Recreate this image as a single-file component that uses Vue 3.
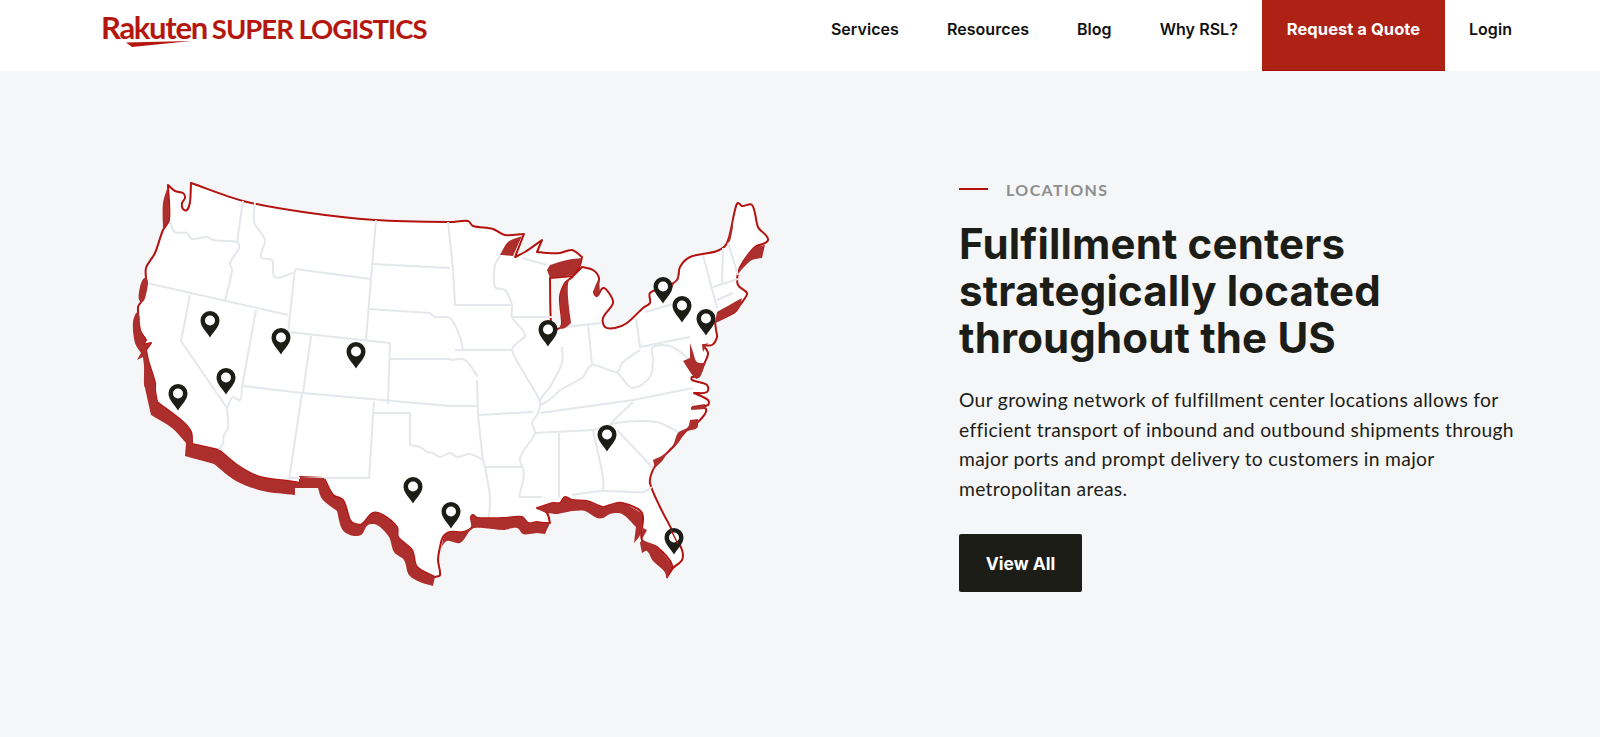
<script setup>
const nav = ['Services', 'Resources', 'Blog', 'Why RSL?']

function curve(str, closed) {
  const p = str.trim().split(/\s+/).map((s) => {
    const sharp = s.endsWith('!')
    const [x, y] = s.replace('!', '').split(',').map(Number)
    return { x, y, sharp }
  })
  const n = p.length
  const at = (i) => (closed ? p[(i + n) % n] : p[Math.max(0, Math.min(n - 1, i))])
  const dir = (a, b) => {
    const dx = b.x - a.x
    const dy = b.y - a.y
    const l = Math.hypot(dx, dy) || 1
    return [dx / l, dy / l]
  }
  const f = (v) => v.toFixed(1)
  let d = `M${p[0].x},${p[0].y}`
  const segs = closed ? n : n - 1
  for (let i = 0; i < segs; i++) {
    const a = at(i)
    const b = at(i + 1)
    const len = Math.hypot(b.x - a.x, b.y - a.y) * 0.3
    const t1 = a.sharp ? dir(a, b) : dir(at(i - 1), b)
    const t2 = b.sharp ? dir(a, b) : dir(a, at(i + 2))
    d += `C${f(a.x + t1[0] * len)},${f(a.y + t1[1] * len)} ${f(b.x - t2[0] * len)},${f(b.y - t2[1] * len)} ${b.x},${b.y}`
  }
  return closed ? d + 'Z' : d
}

const land = curve(`168,185! 175,191 183,193 185,198 182,203 183,209 187,210 190,202 191,183!
 243,201 303,212 375,220 450,222 468,221 473,226 493,229 505,235 524,234! 515,257! 525,252 542,240! 537,252! 547,253 560,253 572,250 582,257!
 580,265 573,276! 550,278! 551,323 554,328 560,328 562,323 560,297 565,283 571,278! 582,267!
 593,270 599,278 597,287 594,292 597,296 603,288 609,293 613,303 603,318 605,327 615,328 627,323 643,308 650,303 650,293 663,288 677,280 680,267 690,257 717,251 727,243 735,210 738,203 742,206 752,205 758,227 768,240 755,247 743,262 738,273 738,285 747,293 745,298 740,305 735,312 715,322! 716,330 717,337 712,345 703,345! 708,353 705,362 698,377 692,377 692,380
 707,385 707,392 694,393! 708,400 708,405 692,408! 706,409 698,422 685,432 675,445 658,462 652,472 650,483 660,507 672,530 682,550 682,560 673,568 667,577!
 672,565 657,547 642,540 642,513 622,503 610,505 603,507 587,501 572,500 565,497 560,503 553,503 537,508! 547,513 550,523! 543,523 537,522 528,523 522,517 503,518 477,518 473,515 471,518 472,527 463,532 450,532 443,537 440,547 438,560 440,575 435,577!
 417,567 412,550 398,537 397,527 383,515 373,513 362,524 355,524 350,520 343,500 333,495 324,478! 300,477! 300,483! 288,481 260,477 237,465 219,450! 192,444! 191,432 183,422 157,402! 155,390 155,383 148,360 146,350! 151,343! 143,345! 146,340! 140,330 138,307 141,302 146,283 146,268 155,253 163,230 169,220`, true)

const shadows = [
  '168,186! 169,220! 163,230! 163,203',
  '146,278 140,287 141,302 147,290',
  `138,313 133,322 135,343 141,353! 137,360! 143,357! 144,367 144,385 145,388! 151,415! 172,428 186,443! 185,456! 214,464! 236,481 263,491 295,495! 295,488! 318,488! 322,499 337,511! 342,529 350,535 361,535 368,525 377,525 389,537 394,552 404,560 409,575 420,582 433,586! 435,577! 417,567 412,550 398,537 397,527 383,515 373,513 362,524 355,524 350,520 343,500! 333,495 324,478! 300,477! 300,483! 288,481 260,477 237,465 219,450! 192,444! 191,432 183,422 157,402! 155,390 155,383 148,360 146,350! 151,343! 143,345! 146,340! 140,330`,
  `667,579! 664,571 653,561 647,551 642,553! 640,543! 647,530! 643,528! 639,537 634,543! 636,527! 622,514 610,514 603,518 597,518 585,511 573,511 562,513 557,514 547,513! 550,523! 545,534! 537,533! 530,534! 523,534 517,528 503,530 483,528 472,529 460,543 447,541 441,548! 442,545 444,537 450,532 463,532 472,527! 471,518 473,515 477,518 503,518 522,517 528,523 537,522 543,523 550,523! 547,513! 537,508! 553,503 560,503 565,497 572,500 587,501 603,507 610,505 622,503 642,513! 642,540! 657,547 672,565!`,
  '582,258! 567,260 550,265! 547,270! 550,278! 573,275! 580,265!',
  '522,236! 508,242 500,255! 513,256!',
  '567,281! 565,283 560,297 562,323! 560,328 565,328 571,323! 568,297 569,280 575,277!',
  '599,278! 594,290 596,296 600,293!',
  '733,220! 728,240 727,243! 730,241 733,227!',
  '765,245! 755,247 743,262 739,273! 743,268 752,260 762,258!',
  '678,280! 680,272! 672,288! 668,288!',
  '742,298! 733,303 717,312! 715,323! 733,313 740,307!',
  '702,345! 708,343! 703,352!',
  '690,343! 693,352 697,362 705,363! 700,377 695,378 683,361! 690,358!',
  '690,420! 698,419! 697,428 685,432 678,443 670,448 663,460 655,468! 653,460! 663,455 673,445 678,433 688,427',
  '692,406! 705,404! 705,409! 691,410!'
].map((s) => curve(s, true))

const rivers = [
  '170,222 175,232 187,233 192,239 207,237 213,240 237,242 239,248 230,263 232,270 225,301',
  '255,202 254,222 265,240 261,257 272,260 275,277 293,273',
  '430,313 435,317 450,318 460,337 463,350',
  '227,408 228,428 224,435 223,443 219,450',
  '242,386 240,400 233,397 227,408',
  '410,445 420,447 427,452 433,453 440,457 450,453 457,457 470,454 483,460',
  '448,222 450,240 453,270 455,305',
  '500,256 495,265 495,287 505,290 512,305 512,317 525,335 517,343 512,350 528,380 540,402 538,413 532,423 535,433 520,458 524,473 519,497',
  '450,360 465,360 478,377',
  '562,347 562,363 550,387 540,403 553,397 560,390 573,383 583,377 592,365 617,372 622,363 640,350',
  '617,372 622,378 633,388 650,377 653,360 653,347 672,347 690,360',
  '633,402 617,417 610,425',
  '593,430 617,423 643,421 660,423 680,433',
  '572,495 603,491 643,492 652,487',
  '593,430 603,477 603,492',
  '478,415 483,460 485,467 490,497 489,517'
].map((s) => curve(s, false))

const lines = [
  '243,201 237,242',
  '147,283 288,315',
  '190,295 181,341 227,408',
  '295,269 371,279',
  '295,269 288,333',
  '371,279 366,340',
  '288,332 390,343',
  '376,220 371,279',
  '373,264 450,268',
  '369,309 430,313',
  '256,310 242,387',
  '311,336 303,393',
  '390,343 388,404',
  '390,359 450,359',
  '242,386 303,393 450,406 477,406',
  '302,393 289,480',
  '374,402 369,478 290,478',
  '374,413 410,413 410,445',
  '454,305 512,305',
  '455,350 512,350',
  '477,380 478,415',
  '478,415 533,412',
  '485,467 522,467',
  '535,433 593,430',
  '559,433 559,497',
  '519,497 542,497',
  '512,317 552,317',
  '565,327 602,323',
  '588,323 592,365',
  '636,318 640,347 690,337',
  '645,312 677,303',
  '540,413 633,400 693,388',
  '617,430 653,468',
  '703,255 717,308',
  '723,248 722,283',
  '728,243 738,275',
  '713,287 738,279',
  '717,300 733,293',
  '522,258 547,265'
].map((s) => 'M' + s.trim().split(/\s+/).join('L'))

const pins = [
  [210, 321], [281, 338], [356, 352], [226, 378], [178, 394], [413, 487], [451, 512],
  [607, 435], [674, 538], [548, 330], [663, 287], [682, 306], [706, 319]
]
</script>

<template>
  <div class="page">
    <header class="header">
      <a class="logo">
        <span class="logo-r">Rakuten</span>
        <span class="logo-s">SUPER LOGISTICS</span>
        <svg class="swoosh" width="66" height="7" viewBox="0 0 66 7"><polygon points="0,1.5 65,0 6,6" fill="#b5170f" /></svg>
      </a>
      <nav class="nav">
        <a v-for="n in nav" :key="n" class="nav-item">{{ n }}</a>
        <a class="nav-cta">Request a Quote</a>
        <a class="nav-item">Login</a>
      </nav>
    </header>

    <main class="main">
      <svg class="map" width="660" height="440" viewBox="120 170 660 440">
        <path :d="land" class="land" />
        <path v-for="(d, i) in lines" :key="'l' + i" :d="d" class="state" />
        <path v-for="(d, i) in rivers" :key="'r' + i" :d="d" class="state" />
        <path v-for="(d, i) in shadows" :key="'s' + i" :d="d" class="shadow" />
        <g v-for="(p, i) in pins" :key="'p' + i" :transform="`translate(${p[0]} ${p[1]})`">
          <path d="M0,16.5C-3,11 -9.5,6 -9.5,-0.5A9.5,9.5 0 1 1 9.5,-0.5C9.5,6 3,11 0,16.5Z" fill="#1d1d17" />
          <circle cx="0" cy="-0.5" r="5" fill="#fff" />
        </g>
        <path d="M671,530L678,544" class="over" />
      </svg>

      <section class="copy">
        <div class="eyebrow"><span class="rule"></span><span>LOCATIONS</span></div>
        <h1>Fulfillment centers strategically located throughout the US</h1>
        <p>Our growing network of fulfillment center locations allows for efficient transport of inbound and outbound shipments through major ports and prompt delivery to customers in major metropolitan areas.</p>
        <a class="btn">View All</a>
      </section>
    </main>
  </div>
</template>

<style>
html, body { margin: 0; background: #f5f6f8; }
</style>

<style scoped>
.page {
  height: 737px;
  overflow: hidden;
  background: #f5f6f8;
  font-family: "Lato", "Liberation Sans", sans-serif;
  color: #1d1d17;
}
.header {
  height: 71px;
  background: #fff;
  display: flex;
  justify-content: space-between;
  padding: 0 64px 0 101px;
}
.logo {
  position: relative;
  display: flex;
  align-items: baseline;
  gap: 5px;
  padding-top: 10px;
  height: 40px;
  color: #b5170f;
  white-space: nowrap;
}
.logo-r { font-size: 31px; line-height: 34px; font-weight: 700; letter-spacing: -1.3px; }
.logo-s { font-size: 27.5px; line-height: 34px; font-weight: 700; letter-spacing: -1px; }
.swoosh { position: absolute; left: 25px; top: 41px; }
.nav { display: flex; align-items: stretch; }
.nav-item, .nav-cta {
  display: flex;
  align-items: center;
  padding: 0 24px 13px;
  font-family: "Inter", "Liberation Sans", sans-serif;
  font-size: 16px;
  font-weight: 600;
  letter-spacing: 0.05px;
  color: #111;
}
.nav-cta {
  width: 183px;
  box-sizing: border-box;
  justify-content: center;
  padding: 0 0 13px;
  background: #ae2216;
  border-bottom: 1px solid #a30f08;
  color: #fff;
  font-size: 16.5px;
  font-weight: 700;
}
.main { display: flex; gap: 179px; padding: 99px 0 0 120px; }
.map { flex: none; display: block; }
.land { fill: #fff; stroke: #b3120e; stroke-width: 2; stroke-linejoin: round; }
.state { fill: none; stroke: #e4e7ec; stroke-width: 2; }
.shadow { fill: #ad2f2d; }
.over { stroke: #b3120e; stroke-width: 1.4; fill: none; }
.copy { width: 570px; padding-top: 8px; }
.eyebrow {
  display: flex;
  align-items: center;
  gap: 18px;
  height: 22px;
  font-size: 16px;
  font-weight: 700;
  letter-spacing: 1.4px;
  color: #8d8e8f;
}
.rule { width: 29px; height: 2px; background: #b5120c; }
h1 {
  margin: 20px 0 0;
  font-family: "Inter", "Liberation Sans", sans-serif;
  font-size: 42px;
  line-height: 47px;
  font-weight: 700;
  letter-spacing: 0.15px;
  width: 480px;
}
p {
  margin: 24px 0 0;
  font-size: 19.3px;
  line-height: 29.6px;
  font-weight: 400;
  letter-spacing: 0.31px;
  width: 570px;
}
.btn {
  margin-top: 31px;
  width: 123px;
  height: 58px;
  border-radius: 2px;
  background: #1d1d17;
  color: #fff;
  display: flex;
  align-items: center;
  justify-content: center;
  font-family: "Inter", "Liberation Sans", sans-serif;
  font-size: 17.5px;
  font-weight: 700;
}
</style>
